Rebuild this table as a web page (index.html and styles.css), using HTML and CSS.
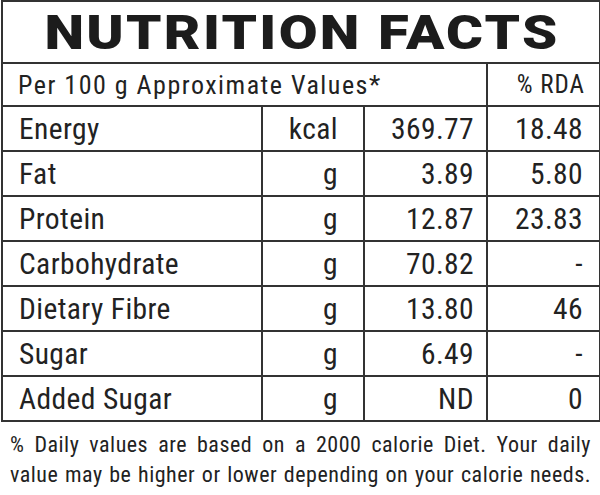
FILE: index.html
```html
<!DOCTYPE html>
<html>
<head>
<meta charset="utf-8">
<link rel="stylesheet" href="styles.css">
</head>
<body>
<div class="label">
  <table class="facts">
    <colgroup>
      <col class="c-name"><col class="c-unit"><col class="c-val"><col class="c-rda">
    </colgroup>
    <tr class="title-row"><th colspan="4" class="title"><span class="title-text">NUTRITION FACTS</span></th></tr>
    <tr class="head-row">
      <td colspan="3" class="head-left">Per 100 g Approximate Values*</td>
      <td class="head-right">% RDA</td>
    </tr>
    <tr class="item"><td class="name">Energy</td><td class="unit">kcal</td><td class="val">369.77</td><td class="rda">18.48</td></tr>
    <tr class="item"><td class="name">Fat</td><td class="unit">g</td><td class="val">3.89</td><td class="rda">5.80</td></tr>
    <tr class="item"><td class="name">Protein</td><td class="unit">g</td><td class="val">12.87</td><td class="rda">23.83</td></tr>
    <tr class="item"><td class="name">Carbohydrate</td><td class="unit">g</td><td class="val">70.82</td><td class="rda">-</td></tr>
    <tr class="item"><td class="name">Dietary Fibre</td><td class="unit">g</td><td class="val">13.80</td><td class="rda">46</td></tr>
    <tr class="item"><td class="name">Sugar</td><td class="unit">g</td><td class="val">6.49</td><td class="rda">-</td></tr>
    <tr class="item"><td class="name">Added Sugar</td><td class="unit">g</td><td class="val">ND</td><td class="rda">0</td></tr>
  </table>
  <p class="note">% Daily values are based on a 2000 calorie Diet. Your daily value may be higher or lower depending on your calorie needs.</p>
</div>
</body>
</html>
```
FILE: styles.css
```css
html, body {
  margin: 0;
  padding: 0;
  background: #fff;
}
.label {
  width: 600px;
  height: 495px;
  overflow: hidden;
  font-family: "Roboto Condensed", "Arial Narrow", Roboto, sans-serif;
  font-stretch: condensed;
  color: #222;
}
.facts {
  margin-left: 1px;
  width: 598px;
  border-collapse: collapse;
  table-layout: fixed;
  border: 2px solid #333;
}
.c-name { width: 260px; }
.c-unit { width: 102px; }
.c-val { width: 123px; }
.c-rda { width: 113px; }
.facts td, .facts th {
  border: 2px solid #333;
  padding: 0;
  vertical-align: middle;
  white-space: nowrap;
}
.title-row { height: 62px; }
.title {
  font-family: Roboto, "Liberation Sans", sans-serif;
  font-stretch: normal;
  font-weight: 900;
  font-size: 49px;
  color: #1c1c1c;
  text-align: center;
  line-height: 1;
}
.title-text {
  display: inline-block;
  letter-spacing: 2px;
  margin-left: 2px;
  transform: scaleX(1.15);
}
.head-row { height: 43px; }
.facts .head-left {
  font-size: 26px;
  letter-spacing: 1.5px;
  padding-left: 15px;
  text-align: left;
}
.facts .head-right {
  font-size: 25px;
  letter-spacing: 1px;
  text-align: right;
  padding-right: 14px;
}
.item { height: 45px; }
.item td {
  font-size: 29.5px;
  letter-spacing: 0.4px;
}
.facts .name {
  padding-left: 16px;
}
.facts .unit {
  text-align: right;
  padding-right: 25px;
}
.facts .val {
  text-align: right;
  padding-right: 12px;
}
.facts .rda {
  text-align: right;
  padding-right: 16px;
}
.note {
  margin: 8px 9px 0 10px;
  font-size: 22px;
  letter-spacing: 0.5px;
  line-height: 30px;
  text-align: justify;
  text-align-last: justify;
  color: #222;
}
```
